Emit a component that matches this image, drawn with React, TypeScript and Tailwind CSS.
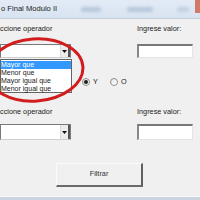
import React from "react";

function Arrow() {
  return (
    <svg width="5" height="3" viewBox="0 0 5 3" className="block">
      <path d="M0 0 L5 0 L2.5 3 Z" fill="#111" />
    </svg>
  );
}

function Combo({ h, children }: { h: string; children?: React.ReactNode }) {
  return (
    <div className={`relative w-[71px] ${h} bg-white border border-[#7a7a7a] border-b-[#cfcfcf] flex justify-end`}>
      <div className="w-[10px] h-full bg-[#ececec] border-l border-[#d9d9d9] border-r-[2px] border-r-[#555] flex items-center justify-center">
        <Arrow />
      </div>
      {children}
    </div>
  );
}

function TextBox({ h }: { h: string }) {
  return (
    <div className={`w-[56px] ${h} bg-white border-t-[2px] border-l-[2px] border-t-[#777] border-l-[#888] border-r border-b border-r-[#e4e4e4] border-b-[#e4e4e4]`} />
  );
}

export default function App() {
  return (
    <div className="relative w-[200px] h-[200px] overflow-hidden bg-[#f0f0f0] flex flex-col font-['Liberation_Sans',sans-serif] text-[7.3px] text-[#222]">
      {/* title bar */}
      <div className="h-[19px] shrink-0 bg-gradient-to-b from-[#e3ebf6] to-[#d8e3f1] border-b border-[#c5d0de] flex items-center">
        <span className="pl-[1px] text-[7.6px] text-[#1a1a1a] leading-none whitespace-nowrap">o Final Modulo II</span>
        <div className="ml-[24px] w-[20px] h-[5px] bg-[#b8c8dc] blur-[1.5px] rounded" />
        <div className="ml-[26px] w-[26px] h-[5px] bg-[#b8c8dc] blur-[1.5px] rounded" />
        <div className="ml-[24px] w-[12px] h-[5px] bg-[#c2d0e2] blur-[1.5px] rounded" />
        <div className="ml-auto self-start w-[5px] h-[13px] bg-[#d27a68] blur-[0.5px]" />
      </div>

      {/* body */}
      <div className="flex-1 flex flex-col">
        <div className="flex pt-[5px] h-[14px] leading-[9px]">
          <span className="w-[137px] whitespace-nowrap">ccione operador</span>
          <span className="whitespace-nowrap">Ingrese valor:</span>
        </div>

        <div className="flex mt-[11px] h-[14px]">
          <Combo h="h-[14px]">
            <div className="absolute left-[-1px] top-[14px] w-[72px] h-[34px] bg-white border border-[#646464] z-10 pt-[1px] leading-[8px] whitespace-nowrap text-[7px]">
              <div className="h-[8px] bg-[#3399ff] text-white">Mayor que</div>
              <div className="h-[8px]">Menor que</div>
              <div className="h-[8px]">Mayor igual que</div>
              <div className="h-[8px]">Menor igual que</div>
            </div>
          </Combo>
          <div className="ml-[66px]">
            <TextBox h="h-[14px]" />
          </div>
        </div>

        <div className="flex items-center mt-[20px] h-[8px] pl-[82px] leading-none">
          <div className="w-[8px] h-[8px] rounded-full border border-[#8e8f8f] bg-gradient-to-br from-[#e6e6e6] to-white flex items-center justify-center">
            <div className="w-[4px] h-[4px] rounded-full bg-[#1d1d1d]" />
          </div>
          <span className="ml-[3px]">Y</span>
          <div className="ml-[12px] w-[8px] h-[8px] rounded-full border border-[#8e8f8f] bg-gradient-to-br from-[#e6e6e6] to-white" />
          <span className="ml-[3px]">O</span>
        </div>

        <div className="flex mt-[21px] h-[9px] leading-[9px]">
          <span className="w-[137px] whitespace-nowrap">ccione operador</span>
          <span className="whitespace-nowrap">Ingrese valor:</span>
        </div>

        <div className="flex mt-[8px] h-[16px]">
          <Combo h="h-[16px]" />
          <div className="ml-[66px]">
            <TextBox h="h-[16px]" />
          </div>
        </div>

        <div className="mt-[23px] ml-[56px] w-[87px] h-[24px] bg-[#f0f0f0] border-t border-l border-t-[#fbfbfb] border-l-[#fbfbfb] border-r-[2px] border-b-[2px] border-r-[#5f5f5f] border-b-[#6a6a6a] flex items-center justify-center">
          <span className="text-[#333]">Filtrar</span>
        </div>
      </div>

      {/* bottom strip */}
      <div className="h-[4px] shrink-0 border-t border-[#fafafa] bg-[#cbd5e2]" />

      {/* red ellipse annotation */}
      <svg className="absolute left-0 top-0 pointer-events-none z-20" width="200" height="200" viewBox="0 0 200 200">
        <ellipse cx="35" cy="70" rx="48" ry="31" fill="none" stroke="#d11d1d" strokeWidth="3" transform="rotate(-4 35 70)" />
      </svg>
    </div>
  );
}
